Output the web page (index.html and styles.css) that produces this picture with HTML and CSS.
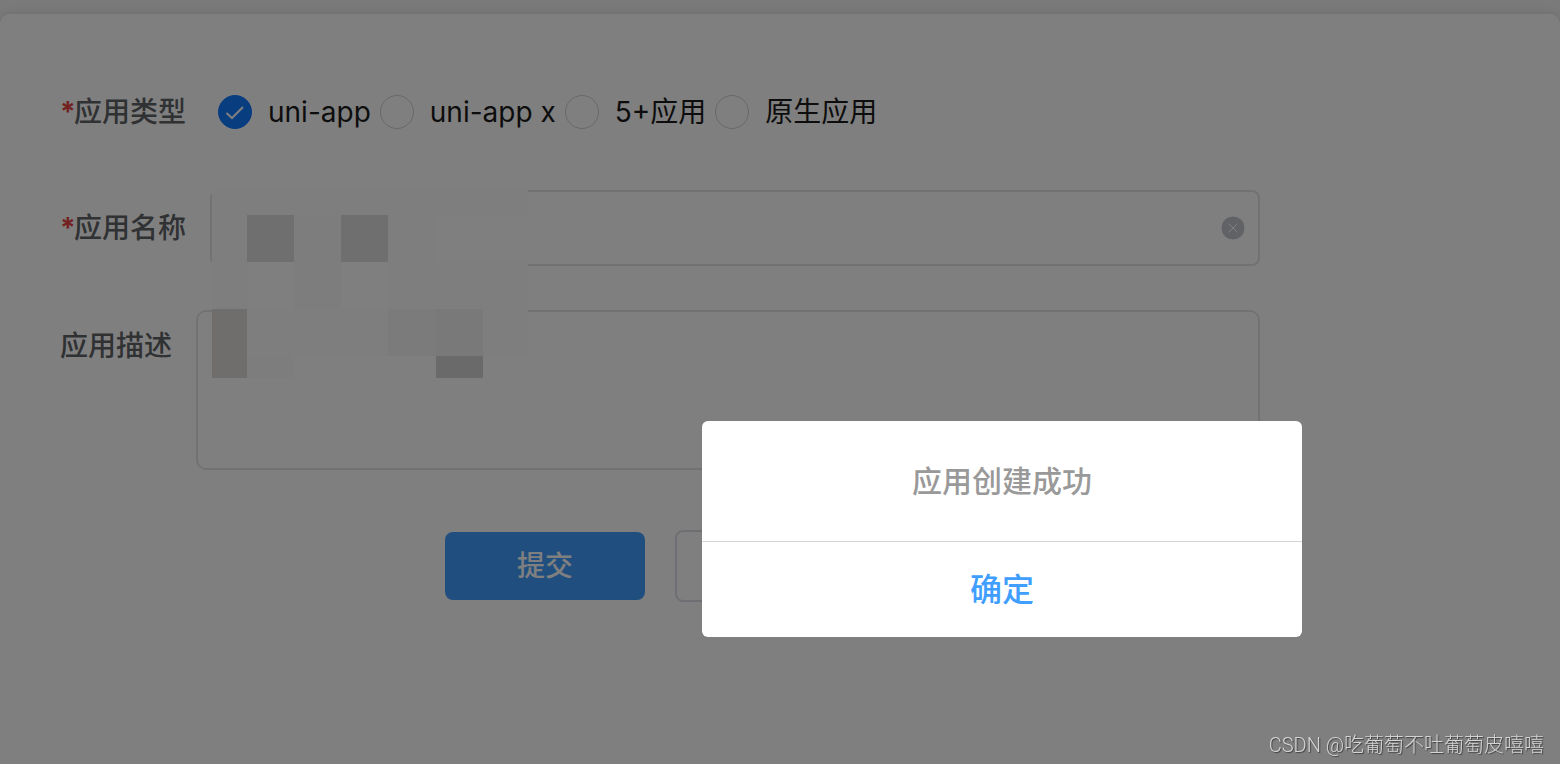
FILE: index.html
```html
<!DOCTYPE html>
<html lang="zh-CN">
<head>
<meta charset="utf-8">
<title>应用创建成功</title>
<link rel="stylesheet" href="styles.css">
</head>
<body>
<main class="page">
  <form class="card">
    <div class="row row-type" role="radiogroup" aria-labelledby="type-label">
      <span class="label" id="type-label"><b class="star">*</b>应用类型</span>
      <div class="options">
        <label class="option"><input class="radio" type="radio" name="type" checked><svg class="tick" viewBox="0 0 34 34" aria-hidden="true"><path d="M8.500 18 14 23 25 12"/></svg><span>uni-app</span></label>
        <label class="option"><input class="radio" type="radio" name="type"><span>uni-app x</span></label>
        <label class="option"><input class="radio" type="radio" name="type"><span>5+应用</span></label>
        <label class="option"><input class="radio" type="radio" name="type"><span>原生应用</span></label>
      </div>
    </div>
    <div class="row row-name">
      <label class="label" for="name"><b class="star">*</b>应用名称</label>
      <div class="field">
        <input class="input" id="name" type="text">
        <button class="clear" type="button">
          <svg viewBox="0 0 24 24" aria-hidden="true"><circle cx="12" cy="12" r="12"/><path d="M7.500 7.500 16.500 16.500M16.500 7.500 7.500 16.500"/></svg>
        </button>
      </div>
    </div>
    <div class="row row-desc">
      <label class="label" for="desc">应用描述</label>
      <textarea class="textarea" id="desc"></textarea>
    </div>
    <div class="actions">
      <button class="btn btn-primary" type="button">提交</button>
      <button class="btn btn-plain" type="button"></button>
    </div>
    <svg class="mosaic" viewBox="0 0 316 190" shape-rendering="crispEdges" aria-hidden="true">
      <path fill="#fdfdfd" d="M0 0H316V190H0z"/>
      <path fill="#fefefe" d="M224 27h92v47h-92zM35 74h47v47H35zM129 74h47v47h-47zM82 168h142v22H82zM271 168h45v22h-45z"/>
      <path fill="#fbfbfb" d="M82 27h47v47H82zM82 74h47v47H82zM35 168h47v22H35z"/>
      <path fill="#f7f7f7" d="M176 121h48v47h-48z"/>
      <path fill="#f3f3f3" d="M224 121h47v47h-47z"/>
      <path fill="#dfdfdf" d="M35 27h47v47H35zM129 27h47v47h-47z"/>
      <path fill="#dfdcd8" d="M0 121h35v69H0z"/>
      <path fill="#d5d5d5" d="M224 168h47v22h-47z"/>
    </svg>
  </form>
</main>
<div class="mask">
  <section class="dialog" role="alertdialog" aria-modal="true" aria-labelledby="dialog-text">
    <p class="dialog-text" id="dialog-text">应用创建成功</p>
    <button class="dialog-ok" type="button">确定</button>
  </section>
</div>
<div class="watermark">CSDN @吃葡萄不吐葡萄皮嘻嘻</div>
</body>
</html>
```
FILE: styles.css
```css
* {
  box-sizing: border-box;
}

body {
  margin: 0;
  font-family: Inter, "Noto Sans CJK SC", sans-serif;
  font-size: 28px;
  line-height: 40px;
  color: #1a1a1a;
}

button,
input,
textarea {
  margin: 0;
  font: inherit;
}

.page {
  display: flex;
  min-height: 100vh;
  padding-top: 14px;
  background: #f5f5f5;
}

.card {
  position: relative;
  flex: 1;
  padding: 78px 300px 0 60px;
  border-radius: 10px 10px 0 0;
  background: #fff;
  box-shadow: 0 0 12px rgba(0, 0, 0, 0.12);
}

.row {
  display: flex;
}

.label {
  flex: none;
  font-weight: 500;
  color: #606266;
}

.star {
  display: inline-block;
  width: 14px;
  color: #e64340;
}

.row-type {
  align-items: center;
}

.options {
  display: flex;
  flex-wrap: wrap;
  gap: 9px;
  margin-left: 32px;
}

.option {
  position: relative;
  display: flex;
  align-items: center;
  gap: 16px;
}

.radio {
  appearance: none;
  width: 34px;
  height: 34px;
  border: 1px solid #d1d1d1;
  border-radius: 50%;
}

.radio:checked {
  border-color: #107aff;
  background: #107aff;
}

.tick {
  position: absolute;
  left: 0;
  top: 3px;
  width: 34px;
  height: 34px;
  fill: none;
  stroke: #fff;
  stroke-width: 2;
}

.row-name {
  margin-top: 58px;
  align-items: center;
}

.field {
  position: relative;
  flex: 1;
  margin-left: 24px;
}

.input,
.textarea {
  display: block;
  width: 100%;
  padding: 16px 20px;
  border: 2px solid #e5e5e5;
  border-radius: 8px;
  background: transparent;
  outline: none;
}

.input {
  height: 76px;
}

.clear {
  position: absolute;
  right: 15px;
  top: 26px;
  width: 24px;
  height: 24px;
  padding: 0;
  border: 0;
  background: none;
}

.clear svg {
  display: block;
  fill: #c0c4cc;
  stroke: #fff;
}

.row-desc {
  margin-top: 44px;
}

.row-desc .label {
  padding-top: 16px;
}

.textarea {
  flex: 1;
  height: 160px;
  margin-left: 24px;
  border-radius: 10px;
  resize: none;
}

.actions {
  display: flex;
  justify-content: center;
  align-items: center;
  gap: 30px;
  margin-top: 60px;
}

.btn {
  width: 200px;
  height: 68px;
  border: 0;
  border-radius: 8px;
  font-weight: 500;
}

.btn-primary {
  background: #409eff;
  color: #fff;
}

.btn-plain {
  height: 72px;
  border: 2px solid #dcdfe6;
  background: #fff;
}

.mosaic {
  position: absolute;
  left: 212px;
  top: 174px;
  width: 316px;
  height: 190px;
}

.mask {
  position: fixed;
  inset: 0;
  display: flex;
  align-items: center;
  justify-content: center;
  padding: 294px 0 0 444px;
  background: rgba(0, 0, 0, 0.5);
}

.dialog {
  width: 600px;
  border-radius: 6px;
  background: #fff;
  text-align: center;
}

.dialog-text {
  margin: 0;
  padding: 40px;
  font-size: 30px;
  font-weight: 500;
  color: #999;
}

.dialog-ok {
  display: block;
  width: 100%;
  height: 96px;
  padding: 0;
  border: 0;
  border-top: 1px solid #d5d5d6;
  background: none;
  font-size: 32px;
  font-weight: 500;
  color: #409eff;
}

.watermark {
  position: fixed;
  right: 16px;
  bottom: 4px;
  font-family: Roboto, "Noto Sans CJK SC", sans-serif;
  font-size: 20px;
  font-weight: 300;
  line-height: 30px;
  color: #d5d5d5;
  text-shadow: 1px 1px 1px #404040;
}
```
